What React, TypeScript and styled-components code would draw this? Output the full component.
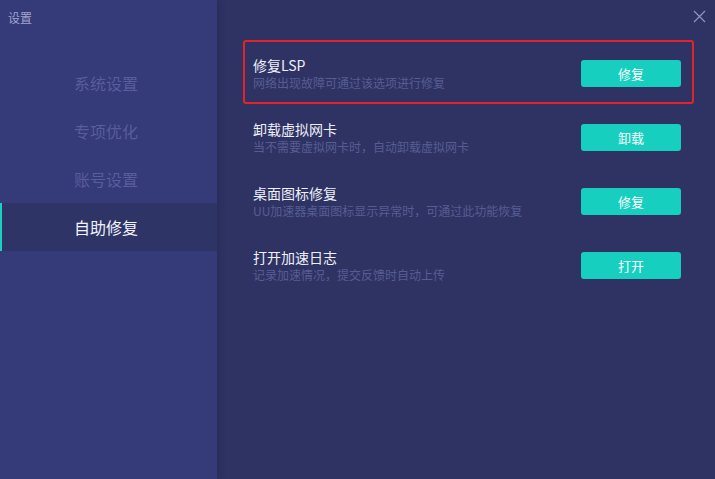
import React from "react";
import styled, { createGlobalStyle } from "styled-components";

const GlobalStyle = createGlobalStyle`
  html, body {
    margin: 0;
    padding: 0;
    background: #2e3363;
  }
  body {
    font-family: "Noto Sans CJK SC", "Noto Sans", "Liberation Sans", sans-serif;
  }
  * {
    box-sizing: border-box;
  }
`;

const Window = styled.div`
  width: 715px;
  height: 479px;
  display: flex;
  background: #2e3363;
  overflow: hidden;
`;

const Sidebar = styled.aside`
  width: 217px;
  flex-shrink: 0;
  display: flex;
  flex-direction: column;
  background: #353a78;
  box-shadow: 3px 0 6px rgba(20, 22, 50, 0.18);
  position: relative;
  z-index: 1;
`;

const WindowTitle = styled.div`
  height: 59px;
  padding: 9px 0 0 8px;
  font-size: 12px;
  line-height: 18px;
  color: #a2a5d0;
`;

const NavItem = styled.div<{ $active?: boolean }>`
  height: 48px;
  display: flex;
  align-items: center;
  padding-left: ${(p) => (p.$active ? "72px" : "74px")};
  font-size: 16px;
  color: ${(p) => (p.$active ? "#f1f2fb" : "#585d9c")};
  background: ${(p) => (p.$active ? "#2f3466" : "transparent")};
  border-left: ${(p) => (p.$active ? "2px solid #1ccfc0" : "none")};
`;

const Main = styled.main`
  flex: 1;
  display: flex;
  flex-direction: column;
`;

const Header = styled.div`
  height: 40px;
  display: flex;
  justify-content: flex-end;
  align-items: flex-start;
  padding: 10px 9px 0 0;
`;

const CloseButton = styled.button`
  width: 13px;
  height: 13px;
  padding: 0;
  border: none;
  background: none;
  cursor: pointer;
  display: flex;
`;

const List = styled.div`
  display: flex;
  flex-direction: column;
  padding-left: 26px;
  width: 477px;
`;

const Row = styled.div<{ $highlight?: boolean }>`
  height: 64px;
  display: flex;
  align-items: flex-start;
  justify-content: space-between;
  padding: 14px 11px 0 8px;
  border: 2px solid ${(p) => (p.$highlight ? "#e3232b" : "transparent")};
  border-radius: 3px;
`;

const Texts = styled.div`
  display: flex;
  flex-direction: column;
`;

const Title = styled.div`
  font-size: 14px;
  line-height: 18px;
  color: #eef0fa;
`;

const Subtitle = styled.div`
  font-size: 12px;
  line-height: 18px;
  color: #575d94;
`;

const ActionButton = styled.button`
  margin-top: 4px;
  width: 100px;
  height: 27px;
  border: none;
  border-radius: 3px;
  background: #17cfbf;
  color: #ffffff;
  font-family: inherit;
  font-size: 13px;
  cursor: pointer;
`;

const navItems = ["系统设置", "专项优化", "账号设置", "自助修复"];

const rows = [
  { title: "修复LSP", desc: "网络出现故障可通过该选项进行修复", action: "修复", highlight: true },
  { title: "卸载虚拟网卡", desc: "当不需要虚拟网卡时，自动卸载虚拟网卡", action: "卸载" },
  { title: "桌面图标修复", desc: "UU加速器桌面图标显示异常时，可通过此功能恢复", action: "修复" },
  { title: "打开加速日志", desc: "记录加速情况，提交反馈时自动上传", action: "打开" },
];

export default function App() {
  return (
    <>
      <GlobalStyle />
      <Window>
        <Sidebar>
          <WindowTitle>设置</WindowTitle>
          {navItems.map((item, i) => (
            <NavItem key={item} $active={i === 3}>
              {item}
            </NavItem>
          ))}
        </Sidebar>
        <Main>
          <Header>
            <CloseButton aria-label="关闭">
              <svg width="13" height="13" viewBox="0 0 13 13">
                <path d="M1 1L12 12M12 1L1 12" stroke="#8f93c4" strokeWidth="1.2" />
              </svg>
            </CloseButton>
          </Header>
          <List>
            {rows.map((r) => (
              <Row key={r.title} $highlight={r.highlight}>
                <Texts>
                  <Title>{r.title}</Title>
                  <Subtitle>{r.desc}</Subtitle>
                </Texts>
                <ActionButton>{r.action}</ActionButton>
              </Row>
            ))}
          </List>
        </Main>
      </Window>
    </>
  );
}
